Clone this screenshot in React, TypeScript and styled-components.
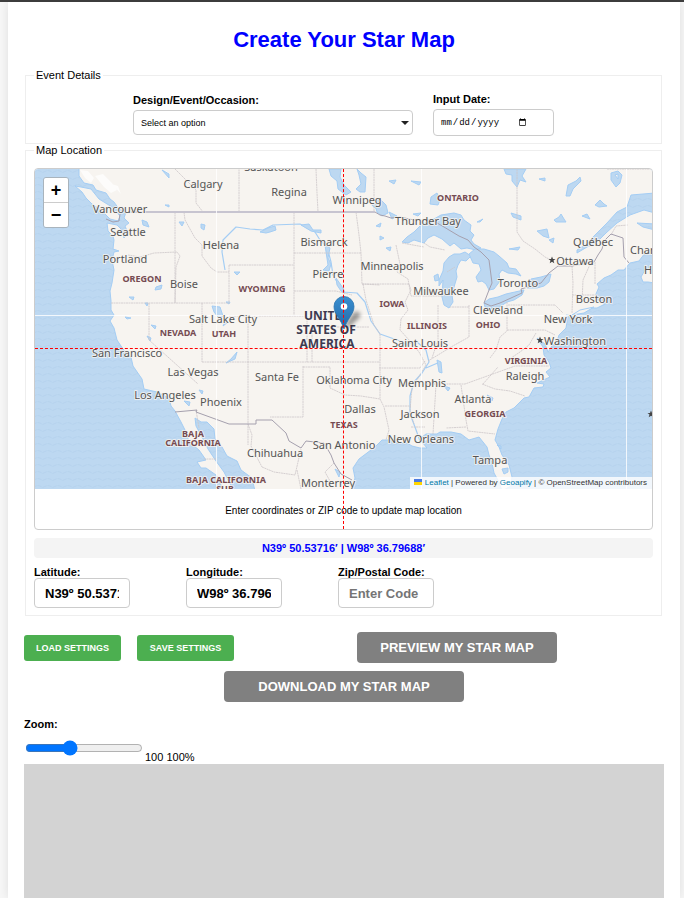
import React, { useState } from "react";
import styled, { createGlobalStyle, css } from "styled-components";

const GlobalStyle = createGlobalStyle`
  *, *::before, *::after { box-sizing: border-box; }
  body {
    margin: 0;
    background: #f7f7f7;
    color: #000;
    font: 11px/13px "Liberation Sans", Arial, sans-serif;
  }
`;

const Page = styled.div`
  display: flex;
  min-height: 100vh;
  padding: 0 4px 0 8px;
  border-top: 2px solid #3f3f3f;
`;

const Card = styled.main`
  display: flex;
  flex: 1;
  flex-direction: column;
  min-width: 0;
  padding: 25px 16px 0;
  background: #fff;
  box-shadow: 0 0 10px rgba(0, 0, 0, 0.1);
`;

const Title = styled.h1`
  margin: 0 0 16px;
  color: #00f;
  font-size: 22px;
  line-height: 26px;
  text-align: center;
`;

const Section = styled.fieldset`
  min-width: 0;
  margin: 0 2px 0 1px;
  padding: 11px 8px 7px;
  border: 1px solid #eee;
`;

const Legend = styled.legend`
  padding: 0 2px;
`;

const EventRow = styled.div`
  display: flex;
  flex-wrap: wrap;
  align-items: center;
  justify-content: center;
  gap: 20px;
`;

const Field = styled.div<{ $gap?: number }>`
  display: flex;
  flex-direction: column;
  gap: ${(p) => p.$gap ?? 0}px;
`;

const Label = styled.label`
  font-weight: bold;
  line-height: 12px;
`;

const boxed = css`
  border: 1px solid #ccc;
  border-radius: 4px;
  background: #fff;
  color: #000;
`;

const SelectWrap = styled.div`
  position: relative;
  width: 280px;

  &::after {
    content: "";
    position: absolute;
    top: 11px;
    right: 4px;
    border: 4px solid transparent;
    border-top-color: #222;
    border-bottom: 0;
    pointer-events: none;
  }
`;

const Select = styled.select`
  ${boxed}
  width: 100%;
  height: 25px;
  padding: 0 7px;
  appearance: none;
  font: 9px "Liberation Sans", Arial, sans-serif;
`;

const DateInput = styled.input`
  ${boxed}
  width: 121px;
  height: 27px;
  padding: 0 24px 0 6px;
  font: 9px "Liberation Mono", "Courier New", monospace;
`;

const MapBox = styled.div`
  position: relative;
  overflow: hidden;
  border: 1px solid #ccc;
  border-radius: 4px;
`;

const MapView = styled.div`
  position: relative;
  height: 320px;
`;

const MapDrawing = styled.svg`
  display: block;
  width: 100%;
  height: 100%;
`;

const MapHint = styled.p`
  margin: 0;
  padding: 16px 0 12px;
  font-size: 10px;
  line-height: 12px;
  text-align: center;
`;

const CrossHair = styled.div<{ $vertical?: boolean }>`
  position: absolute;
  pointer-events: none;
  ${(p) =>
    p.$vertical
      ? css`
          top: 0;
          bottom: 0;
          left: 50%;
          margin-left: -1px;
          border-left: 1px dashed red;
        `
      : css`
          top: 50%;
          right: 0;
          left: 0;
          margin-top: -1px;
          border-top: 1px dashed red;
        `}
`;

const ZoomControl = styled.div`
  position: absolute;
  top: 8px;
  left: 8px;
  display: flex;
  flex-direction: column;
  overflow: hidden;
  border: 1px solid #a9b4bd;
  border-radius: 3px;
`;

const ZoomButton = styled.button`
  width: 24px;
  height: 24px;
  padding: 0;
  border: 0;
  background: #fff;
  color: #000;
  font: bold 18px/22px "Liberation Sans", Arial, sans-serif;

  & + & {
    height: 25px;
    border-top: 1px solid #ccc;
  }
`;

const Attribution = styled.div`
  position: absolute;
  right: 0;
  bottom: 0;
  padding: 0 5px 0 4px;
  background: rgba(255, 255, 255, 0.8);
  color: #333;
  font-size: 8px;
  line-height: 12px;

  a {
    color: #0078a8;
    text-decoration: none;
  }

  svg {
    margin-right: 3px;
  }
`;

const Coordinates = styled.output`
  display: block;
  margin: 8px 0;
  border-radius: 4px;
  background: #f4f4f4;
  color: #00f;
  font-weight: bold;
  line-height: 20px;
  text-align: center;
`;

const LocationRow = styled.div`
  display: flex;
  flex-wrap: wrap;
  gap: 56px;
`;

const TextInput = styled.input`
  ${boxed}
  width: 96px;
  height: 30px;
  padding: 0 10px;
  font: bold 13px "Liberation Sans", Arial, sans-serif;

  &::placeholder {
    color: #757575;
  }
`;

const Actions = styled.div`
  display: flex;
  align-items: center;
  gap: 16px;
  margin-top: 16px;
`;

const PrimarySlot = styled.div`
  display: flex;
  flex: 1;
  justify-content: center;
`;

const SettingsButton = styled.button`
  min-width: 97px;
  height: 26px;
  padding: 0 11px;
  border: 0;
  border-radius: 3px;
  background: #4caf50;
  color: #fff;
  font: bold 9px "Liberation Sans", Arial, sans-serif;
  text-transform: uppercase;
`;

const MainButton = styled.button<{ $width: number }>`
  width: ${(p) => p.$width}px;
  height: 31px;
  padding: 0;
  border: 0;
  border-radius: 4px;
  background: #808080;
  color: #fff;
  font: bold 13px "Liberation Sans", Arial, sans-serif;
  text-transform: uppercase;
`;

const DownloadRow = styled.div`
  display: flex;
  justify-content: center;
  margin: 8px 0 16px;
`;

const ZoomRow = styled.div`
  display: flex;
  align-items: flex-end;
  gap: 2px;
  height: 34px;
`;

const Slider = styled.input`
  width: 118px;
  height: 16px;
  margin: 0 0 8px 1px;
`;

const Preview = styled.section`
  flex: 1;
  min-height: 134px;
  background: #d3d3d3;
`;

type Place = [string, number, number];

const cities: Place[] = [
  ["Calgary", 203, 188], ["Regina", 289, 196], ["Saskatoon", 271, 171],
  ["Winnipeg", 357, 204], ["Vancouver", 120, 213], ["Seattle", 128, 236],
  ["Portland", 125, 263], ["Helena", 221, 249], ["Boise", 184, 288],
  ["Bismarck", 324, 246], ["Pierre", 328, 278], ["Thunder Bay", 428, 225],
  ["Minneapolis", 392, 270], ["Milwaukee", 441, 295], ["Québec", 593, 246],
  ["Ottawa", 575, 265], ["Toronto", 518, 287], ["Boston", 594, 303],
  ["Cleveland", 498, 314], ["New York", 568, 323], ["Washington", 575, 345],
  ["Salt Lake City", 223, 323], ["San Francisco", 127, 357],
  ["Las Vegas", 193, 376], ["Los Angeles", 165, 399], ["Phoenix", 221, 406],
  ["Santa Fe", 277, 381], ["Oklahoma City", 354, 384], ["Memphis", 422, 387],
  ["Saint Louis", 420, 347], ["Raleigh", 525, 380], ["Atlanta", 473, 403],
  ["Dallas", 360, 413], ["Jackson", 420, 418], ["New Orleans", 421, 443],
  ["San Antonio", 344, 449], ["Chihuahua", 275, 457], ["Monterrey", 328, 487],
  ["Tampa", 490, 464],
];

const regions: Place[] = [
  ["OREGON", 142, 282], ["WYOMING", 262, 292], ["IOWA", 392, 307],
  ["NEVADA", 178, 336], ["UTAH", 224, 337], ["ILLINOIS", 427, 329],
  ["OHIO", 488, 328], ["ONTARIO", 458, 201], ["VIRGINIA", 526, 364],
  ["TEXAS", 344, 428], ["GEORGIA", 485, 417], ["BAJA", 193, 437],
  ["CALIFORNIA", 193, 446], ["BAJA CALIFORNIA", 226, 483], ["SUR", 225, 492],
];

const country: Place[] = [["UNITED", 327, 320], ["STATES OF", 326, 334], ["AMERICA", 327, 348]];

const lakes = [
  "M402 242L407 237 414 232 420 226 427 222 434 219 441 215 454 213 461 215 464 220 471 225 470 231 474 235 471 240 474 244 481 248 476 250 467 248 461 249 454 243 450 246 442 239 434 235 428 238 424 243 414 240 408 243Z",
  "M444 263L449 257 454 254 460 254 465 252 471 256 466 261 461 260 458 265 456 271 457 277 454 287 452 295 453 302 449 308 444 305 442 297 443 280 439 286 439 280 443 271Z",
  "M469 254L475 249 484 249 494 252 499 256 507 263 509 268 516 269 521 276 516 274 508 273 502 270 499 274 500 281 494 289 489 290 486 284 482 281 478 282 476 277 481 270 479 264 473 263Z",
  "M484 303L489 299 498 297 506 294 515 292 524 290 522 295 514 300 507 302 498 308 491 309 485 307Z",
  "M526 284L531 279 541 277 551 274 549 282 544 286 537 288 527 288Z",
  "M329 169L341 169 340 177 344 185 351 192 346 195 338 189 337 181 331 176Z",
  "M357 169L361 173 366 177 365 192 360 192 356 189 361 184 359 175Z",
  "M504 169L526 169 522 176 526 182 520 180 517 187 512 181 512 175 506 174Z",
  "M566 196L568 185 576 181 580 177 581 181 573 189 570 196Z",
  "M611 173L618 171 622 175 620 183 616 187 611 180ZM615 175L618 179 618 174Z",
  "M511 213L521 216 521 220 513 217ZM554 220L559 217 561 214 564 219 566 222 556 222ZM537 231L547 229 549 238 543 236ZM595 205L600 200 604 204 607 206 599 207ZM549 240L554 238 553 243ZM539 179L545 178 545 181ZM477 222L483 219 480 222ZM582 216L587 214 590 219ZM509 249L520 247 518 250Z",
  "M375 205L379 198 386 205 388 213 382 216 377 212ZM389 212L397 216 392 219ZM376 226L381 223 380 227ZM411 181L421 182 419 185ZM431 197L437 193 440 200 438 205 430 204ZM413 214L421 213 418 216ZM380 236L384 238 380 240ZM386 248L391 247 390 251ZM389 181L396 180 394 184ZM434 276L438 274 439 280 435 281Z",
  "M142 220L147 222 149 227 143 225ZM179 222L184 222 182 226ZM201 224L205 225 204 230 201 228ZM165 205L169 205 169 207ZM156 287L162 285 161 289 155 290ZM129 297L134 297 133 300ZM145 303L148 303 147 306ZM212 306L220 307 223 316 218 317 214 312ZM228 322L223 326 225 322ZM151 325L156 326 155 329ZM147 336L151 338 150 341ZM125 317L131 318 127 319ZM234 272L240 272 237 275ZM226 302L230 302 229 304ZM231 359L237 352 235 359 226 363ZM199 390L203 391 202 394ZM184 401L190 402 189 406ZM162 170L169 174 169 178Z",
  "M260 232L268 228 275 226 276 230 270 232 266 233ZM301 225L309 224 313 230 321 230 321 233 311 231ZM325 245L330 248 328 258 331 264 329 271 323 270 328 265ZM336 278L343 288 345 293 341 291 337 285ZM437 360L441 362 442 373 439 372ZM335 469L340 472 339 477ZM497 445L501 446 501 449ZM502 469L508 468 508 472 504 474ZM487 395L493 398 492 401ZM444 386L450 388 448 391Z",
];

const coast =
  "M79 167L79 176 84 183 93 185 96 190 106 193 110 199 114 202 119 209 126 212 124 218 129 223 125 226 128 233 124 238 121 229 117 225 107 223 108 231 113 236 114 240 113 249 119 251 114 252 112 260 114 270 112 283 110 291 111 301 111 310 114 315 110 321 114 328 117 340 123 349 131 357 133 366 142 379 144 389 157 392 169 398 171 406 175 411 181 422 186 432 189 442 199 450 206 460 197 462 201 468 206 468 216 475 221 485 224 491 234 491 228 480 224 472 216 461 208 449 202 437 196 426 195 418 201 422 207 422 214 429 215 439 222 447 227 456 237 461 241 470 252 478 255 491 351 491 355 478 353 468 359 459 367 453 376 446 382 440 390 440 397 443 407 443 412 446 420 448 427 448 422 442 430 440 422 437 426 434 437 434 440 432 451 432 461 434 469 440 479 437 487 447 489 455 492 463 494 473 499 482 502 491 511 486 512 477 509 465 502 455 499 447 495 440 498 429 502 419 506 412 514 408 524 398 529 397 534 388 543 387 544 384 537 383 550 377 546 372 551 368 549 362 544 355 543 347 537 338 545 344 548 352 552 346 557 341 559 335 566 328 567 322 566 315 574 316 592 308 597 308 605 304 597 299 596 294 599 287 597 284 604 278 611 275 618 270 624 270 630 263 639 261 645 253 653 249 655 230 643 227 637 223 655 224 655 213 644 210 630 215 617 223 606 233 596 243 587 247 577 253 577 250 587 244 594 236 607 223 617 212 627 207 631 195 655 193 655 167Z";

const stateLines = [
  "M239 167V212M316 169L317 193 318 212M374 169V212M175 169L188 182 196 190 196 203 203 212",
  "M517 167V232L523 241 535 249 545 257 551 260",
  "M175 212V303M111 303H230M184 212L185 220 195 238 202 245 202 256 211 268 217 272 229 272",
  "M128 255L140 257 154 253 177 252 180 256 176 267 175 303M229 265V303M229 265H294M294 212V316M229 316H307V362M202 303V362M149 303V340L198 384",
  "M202 362H380M248 316V445M294 253H361M356 212L359 235 361 253 362 284 380 285M294 291H336L352 295",
  "M312 327H369M312 362V327M303 366V417H270M303 367H330V388L345 395 361 396 380 399M380 334V399L384 407 389 430 386 440",
  "M362 284L409 284 411 290 405 302 408 310 401 319M363 284L366 300 374 325 380 334M396 245L400 264 397 272 408 279 411 296H443",
  "M401 319L400 330 410 341 419 352 426 365 412 388 410 410 414 424M385 406H411M411 427L425 427",
  "M379 368H420L425 361M438 305V340L432 358M469 305V337L451 347 438 355 428 361M424 384H465L515 366H549M436 385L433 434",
  "M461 385L466 420 468 431 495 434M466 427L446 428M482 384L495 389 510 391 525 396M483 384L498 367M469 307H450",
  "M507 302V331L500 337 496 350 490 358M508 305H555L563 313M507 330H545L555 335M536 333L529 345 520 352 511 358M572 266L573 283 572 313M592 260L583 280 582 303M572 295H596M595 262L595 284",
  "M196 410L199 428M248 424L252 435 251 446 262 467M262 467L274 472 295 475 301 449M297 470L301 489M334 463L325 472 330 481M204 459H216",
  "M424 243L430 247 445 250M455 267L447 272M611 235L616 226 628 225M607 169L655 169M402 243L424 247",
];

const rivers = [
  "M225 270L222 252 223 240 236 227 250 229 263 230 273 225 300 224 315 232 320 240 327 247 331 262 333 275 343 292 357 293 365 302 371 321 380 334 400 341 409 346",
  "M405 345L416 341 426 350 429 362 422 373 414 382 410 396 410 414 415 427 420 441M426 368L440 362M381 212L372 205",
];

const MapCanvas = () => (
  <MapDrawing viewBox="35 169 617 320" preserveAspectRatio="xMidYMid slice" role="img" aria-label="Map of the United States">
    <defs>
      <pattern id="waves" width="10" height="7" patternUnits="userSpaceOnUse">
        <path d="M0 3Q2.500 5.500 5 3.500T10 3" fill="none" stroke="#b0cfeb" strokeOpacity=".6" strokeWidth="1" />
      </pattern>
      <linearGradient id="pin" x1="0" y1="0" x2="0" y2="1">
        <stop offset="0" stopColor="#3a8fd0" />
        <stop offset="1" stopColor="#2268a8" />
      </linearGradient>
      <filter id="soft" x="-50%" y="-50%" width="200%" height="200%">
        <feGaussianBlur stdDeviation="2" />
      </filter>
    </defs>
    <rect x="35" y="169" width="618" height="320" fill="#bdd8f1" />
    <rect x="35" y="169" width="618" height="320" fill="url(#waves)" />
    <g fill="#f7f4f0" stroke="#a4cdf4" strokeWidth="1" strokeLinejoin="round">
      <path d={coast} />
      <path d="M75 186L81 187 91 189 99 199 112 207 120 216 118 221 110 219 102 211 92 204 86 198 82 192Z" />
      <path d="M641 277L645 270 655 265 655 283 648 282 643 282ZM572 315L580 310 594 307 584 313Z" />
    </g>
    <g fill="#fff" opacity=".7">
      <path d="M80 170L88 171 94 178 91 183 85 178ZM95 176L103 174 112 183 117 190 111 193 104 187ZM165 170L170 174 168 179ZM112 184L118 186 121 194Z" />
    </g>
    <g fill="none" stroke="#a4cdf4" strokeWidth="1.200" strokeLinejoin="round">
      {rivers.map((d) => <path key={d} d={d} />)}
    </g>
    <g fill="#bdd8f1" stroke="#a4cdf4" strokeWidth="1" strokeLinejoin="round">
      {lakes.map((d) => <path key={d} d={d} />)}
    </g>
    <g fill="none" stroke="#cdc6c9" strokeWidth=".8" strokeDasharray="2 .5">
      {stateLines.map((d) => <path key={d} d={d} />)}
    </g>
    <path d="M131 212H375" stroke="#c7c4d0" strokeWidth="2" />
    <g fill="none" stroke="#a5a0ae" strokeWidth="1">
      <path d="M106 219L113 222 119 221 120 214M375 212L380 215 385 216 391 218 400 217 414 220 432 220 444 227 459 236 468 240 474 247 481 252 489 260 492 283 489 290 484 303 491 306 500 303 522 293 521 289 528 287 541 283 549 273 558 266 572 266 594 262 598 255 602 249 604 241 611 234 617 236 623 238 624 257 629 263" />
      <path d="M175 412L197 410 196 412 229 424H256V420H272L286 433 289 441 301 448 306 441 324 443 331 455 334 463 341 474 352 480" />
    </g>
    <path d="M216.500 169V489M421.500 169V489M626.500 169V489M35 315.500H653" stroke="#fff" strokeOpacity=".8" />
    <g fontFamily="'Noto Sans', sans-serif" textAnchor="middle" stroke="#f7f4f0" strokeOpacity=".8" strokeWidth="2" strokeLinejoin="round" paintOrder="stroke">
      <g fontSize="11" fill="#555">
        {cities.map(([name, x, y]) => <text key={name} x={x} y={y}>{name}</text>)}
        <text x="630" y="254" textAnchor="start">Charlottetown</text>
        <text x="644" y="274" textAnchor="start">Halifax</text>
      </g>
      <g fontSize="9" fontWeight="700" fill="#754b52">
        {regions.map(([name, x, y]) => <text key={name} x={x} y={y}>{name}</text>)}
      </g>
      <g fontSize="12" fontWeight="700" fill="#3d3b50">
        {country.map(([name, x, y]) => <text key={name} x={x} y={y}>{name}</text>)}
      </g>
    </g>
    <g fill="#444">
      {[[552, 260], [540, 340], [651, 414]].map(([x, y]) => (
        <path key={x} transform={`translate(${x} ${y})`} d="M0-3.500L1-1H3.500L1.500 .6 2.300 3.200 0 1.700-2.300 3.200-1.500 .6-3.500-1H-1Z" />
      ))}
    </g>
    <path d="M344 327L353 313Q361 309 360 317L350 326Z" fill="#000" opacity=".4" filter="url(#soft)" />
    <path d="M344 329C341 319 334 314 334 306.500A10 10 0 0 1 354 306.500C354 314 347 319 344 329Z" fill="url(#pin)" stroke="#2a72ad" strokeWidth=".8" />
    <circle cx="344" cy="306.500" r="3.300" fill="#fff" />
  </MapDrawing>
);

export default function App() {
  const [zoom, setZoom] = useState(100);

  return (
    <>
      <GlobalStyle />
      <Page>
        <Card>
          <Title>Create Your Star Map</Title>

          <Section>
            <Legend>Event Details</Legend>
            <EventRow>
              <Field $gap={4}>
                <Label htmlFor="occasion">Design/Event/Occasion:</Label>
                <SelectWrap>
                  <Select id="occasion" defaultValue="">
                    <option value="">Select an option</option>
                  </Select>
                </SelectWrap>
              </Field>
              <Field $gap={4}>
                <Label htmlFor="date">Input Date:</Label>
                <DateInput id="date" type="date" />
              </Field>
            </EventRow>
          </Section>

          <Section>
            <Legend>Map Location</Legend>
            <MapBox>
              <MapView>
                <MapCanvas />
                <ZoomControl>
                  <ZoomButton type="button" aria-label="Zoom in">+</ZoomButton>
                  <ZoomButton type="button" aria-label="Zoom out">−</ZoomButton>
                </ZoomControl>
                <Attribution>
                  <svg width="8" height="6" viewBox="0 0 8 6" aria-hidden="true">
                    <path fill="#4c7be1" d="M0 0h8v3H0z" />
                    <path fill="#ffd500" d="M0 3h8v3H0z" />
                  </svg>
                  <a href="#leaflet">Leaflet</a> | Powered by <a href="#geoapify">Geoapify</a> | © OpenStreetMap contributors
                </Attribution>
              </MapView>
              <MapHint>Enter coordinates or ZIP code to update map location</MapHint>
              <CrossHair $vertical />
              <CrossHair />
            </MapBox>
            <Coordinates>N39º 50.53716′ | W98º 36.79688′</Coordinates>
            <LocationRow>
              <Field>
                <Label htmlFor="latitude">Latitude:</Label>
                <TextInput id="latitude" defaultValue="N39º 50.53716′" />
              </Field>
              <Field>
                <Label htmlFor="longitude">Longitude:</Label>
                <TextInput id="longitude" defaultValue="W98º 36.79688′" />
              </Field>
              <Field>
                <Label htmlFor="zip">Zip/Postal Code:</Label>
                <TextInput id="zip" placeholder="Enter Code" />
              </Field>
            </LocationRow>
          </Section>

          <Actions>
            <SettingsButton type="button">Load Settings</SettingsButton>
            <SettingsButton type="button">Save Settings</SettingsButton>
            <PrimarySlot>
              <MainButton type="button" $width={200}>Preview My Star Map</MainButton>
            </PrimarySlot>
          </Actions>
          <DownloadRow>
            <MainButton type="button" $width={240}>Download My Star Map</MainButton>
          </DownloadRow>

          <Label htmlFor="zoom">Zoom:</Label>
          <ZoomRow>
            <Slider
              id="zoom"
              type="range"
              min={10}
              max={260}
              value={zoom}
              onChange={(e) => setZoom(Number(e.target.value))}
            />
            <span>{zoom} {zoom}%</span>
          </ZoomRow>
          <Preview aria-label="Star map preview" />
        </Card>
      </Page>
    </>
  );
}
